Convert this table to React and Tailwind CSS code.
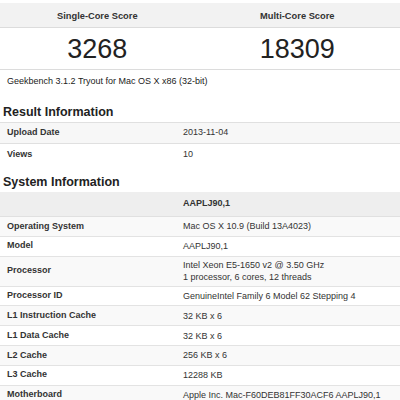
export default function App() {
  const font = { fontFamily: '"Liberation Sans", Arial, Helvetica, sans-serif' };
  const sys = [
    ["Operating System", ["Mac OS X 10.9 (Build 13A4023)"]],
    ["Model", ["AAPLJ90,1"]],
    ["Processor", ["Intel Xeon E5-1650 v2 @ 3.50 GHz", "1 processor, 6 cores, 12 threads"]],
    ["Processor ID", ["GenuineIntel Family 6 Model 62 Stepping 4"]],
    ["L1 Instruction Cache", ["32 KB x 6"]],
    ["L1 Data Cache", ["32 KB x 6"]],
    ["L2 Cache", ["256 KB x 6"]],
    ["L3 Cache", ["12288 KB"]],
    ["Motherboard", ["Apple Inc. Mac-F60DEB81FF30ACF6 AAPLJ90,1"]],
  ];
  return (
    <div className="w-[400px] h-[400px] overflow-hidden bg-white text-[#333]" style={font}>
      <div className="h-[3px]" />
      <div className="flex h-[25px] items-center bg-[#f2f2f2] border-b border-[#dcdcdc] text-[9.3px] font-bold text-[#333]">
        <div className="w-[216px] text-center pt-[3px]">Single-Core Score</div>
        <div className="w-[228px] text-center pt-[3px]">Multi-Core Score</div>
      </div>
      <div className="flex h-[42px] items-center border-b border-[#dcdcdc] text-[27px] leading-none text-[#222]">
        <div className="w-[216px] text-center pt-[1px]">3268</div>
        <div className="w-[228px] text-center pt-[1px]">18309</div>
      </div>
      <div className="pl-[7px] h-[23px] flex items-center text-[9px] text-[#222]">
        Geekbench 3.1.2 Tryout for Mac OS X x86 (32-bit)
      </div>
      <div className="pl-[3px] h-[29px] flex items-end pb-[2px] text-[12.5px] leading-[15px] font-bold text-[#222]">
        Result Information
      </div>
      <div className="border-t border-[#e0e0e0] text-[9px]">
        <div className="flex h-[21px] items-center bg-[#f7f7f7] border-b border-[#e0e0e0]">
          <div className="w-[183px] pl-[7px] font-bold">Upload Date</div>
          <div>2013-11-04</div>
        </div>
        <div className="flex h-[21px] items-center">
          <div className="w-[183px] pl-[7px] font-bold">Views</div>
          <div>10</div>
        </div>
      </div>
      <div className="pl-[3px] h-[27px] flex items-end pb-[2px] text-[12.5px] leading-[15px] font-bold text-[#222]">
        System Information
      </div>
      <div className="text-[9px]">
        <div className="flex h-[25px] items-center bg-[#eeeeee] border-b border-[#e0e0e0]">
          <div className="w-[183px]" />
          <div className="font-bold">AAPLJ90,1</div>
        </div>
        {sys.map(([k, v], i) => (
          <div
            key={k}
            className={
              "flex items-center border-b border-[#e3e3e3] " +
              (v.length > 1 ? "h-[30px] " : "h-[19.8px] ") +
              (i % 2 === 0 ? "bg-[#f9f9f9]" : "bg-white")
            }
          >
            <div className="w-[183px] pl-[7px] font-bold">{k}</div>
            <div className="leading-[12px]">
              {v.map((t) => (
                <div key={t}>{t}</div>
              ))}
            </div>
          </div>
        ))}
      </div>
    </div>
  );
}
